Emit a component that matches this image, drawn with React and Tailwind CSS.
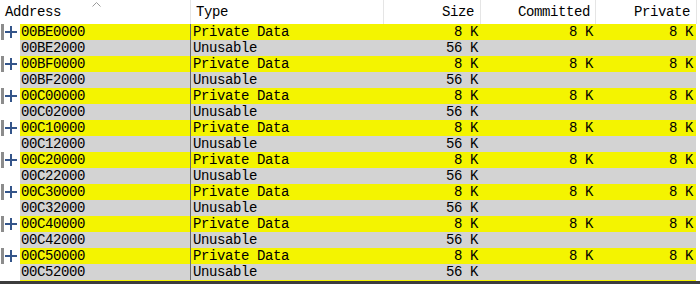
import React from 'react';

const regions = ['BE', 'BF', 'C0', 'C1', 'C2', 'C3', 'C4', 'C5'];

const rows = regions.flatMap((r) => [
  { addr: `00${r}0000`, type: 'Private Data', size: '8 K', committed: '8 K', priv: '8 K', top: true },
  { addr: `00${r}2000`, type: 'Unusable', size: '56 K', committed: '', priv: '', top: false },
]);

const font = { fontFamily: '"Liberation Mono", "DejaVu Sans Mono", monospace' };

const HeaderCell = ({ children, className = '' }) => (
  <div className={`h-full flex items-center border-r border-[#e5e5e5] ${className}`}>{children}</div>
);

const Row = ({ row }) => {
  const bg = row.top ? 'bg-[#f4f400]' : 'bg-[#d3d3d3]';
  return (
    <div className="flex h-4 leading-4">
      <div className="w-5 h-4 relative shrink-0">
        {row.top && (
          <>
            <div className="absolute left-[1px] top-0 w-[3px] h-4 bg-[#8c8c8c]" />
            <svg className="absolute left-[5px] top-[2px]" width="12" height="12" viewBox="0 0 12 12">
              <path d="M0 6H12M6 0V12" stroke="#34558a" strokeWidth="2" />
            </svg>
          </>
        )}
      </div>
      <div className={`flex flex-1 ${bg}`}>
        <div className="w-[170px] pl-[1px] shrink-0">{row.addr}</div>
        <div className="w-[193px] pl-[2px] border-l border-[#6a6a6a] shrink-0">{row.type}</div>
        <div className="w-[97px] pr-[2px] text-right shrink-0">{row.size}</div>
        <div className="w-[115px] pr-[2px] text-right shrink-0">{row.committed}</div>
        <div className="w-[101px] pr-[3px] text-right shrink-0">{row.priv}</div>
      </div>
      <div className="w-1 shrink-0 bg-white" />
    </div>
  );
};

export default function App() {
  return (
    <div className="w-[700px] h-[284px] bg-white overflow-hidden text-[14px] tracking-[-0.4px] text-black" style={font}>
      <div className="flex h-6 relative">
        <svg className="absolute left-[92px] top-[1px]" width="9" height="6" viewBox="0 0 9 6">
          <path d="M0.5 5.5L4.5 1.5L8.5 5.5" fill="none" stroke="#9a9a9a" strokeWidth="1" />
        </svg>
        <HeaderCell className="w-[191px] pl-[5px]">Address</HeaderCell>
        <HeaderCell className="w-[193px] pl-[5px]">Type</HeaderCell>
        <HeaderCell className="w-[97px] justify-end pr-[6px]">Size</HeaderCell>
        <HeaderCell className="w-[115px] justify-end pr-[5px]">Committed</HeaderCell>
        <HeaderCell className="w-[101px] justify-end pr-[6px]">Private</HeaderCell>
      </div>
      {rows.map((row, i) => (
        <Row key={i} row={row} />
      ))}
      <div className="flex h-[1px]">
        <div className="w-5" />
        <div className="flex-1 bg-[#f4f400]" />
        <div className="w-1" />
      </div>
      <div className="h-[3px] bg-[#3c3c3c]" />
    </div>
  );
}
